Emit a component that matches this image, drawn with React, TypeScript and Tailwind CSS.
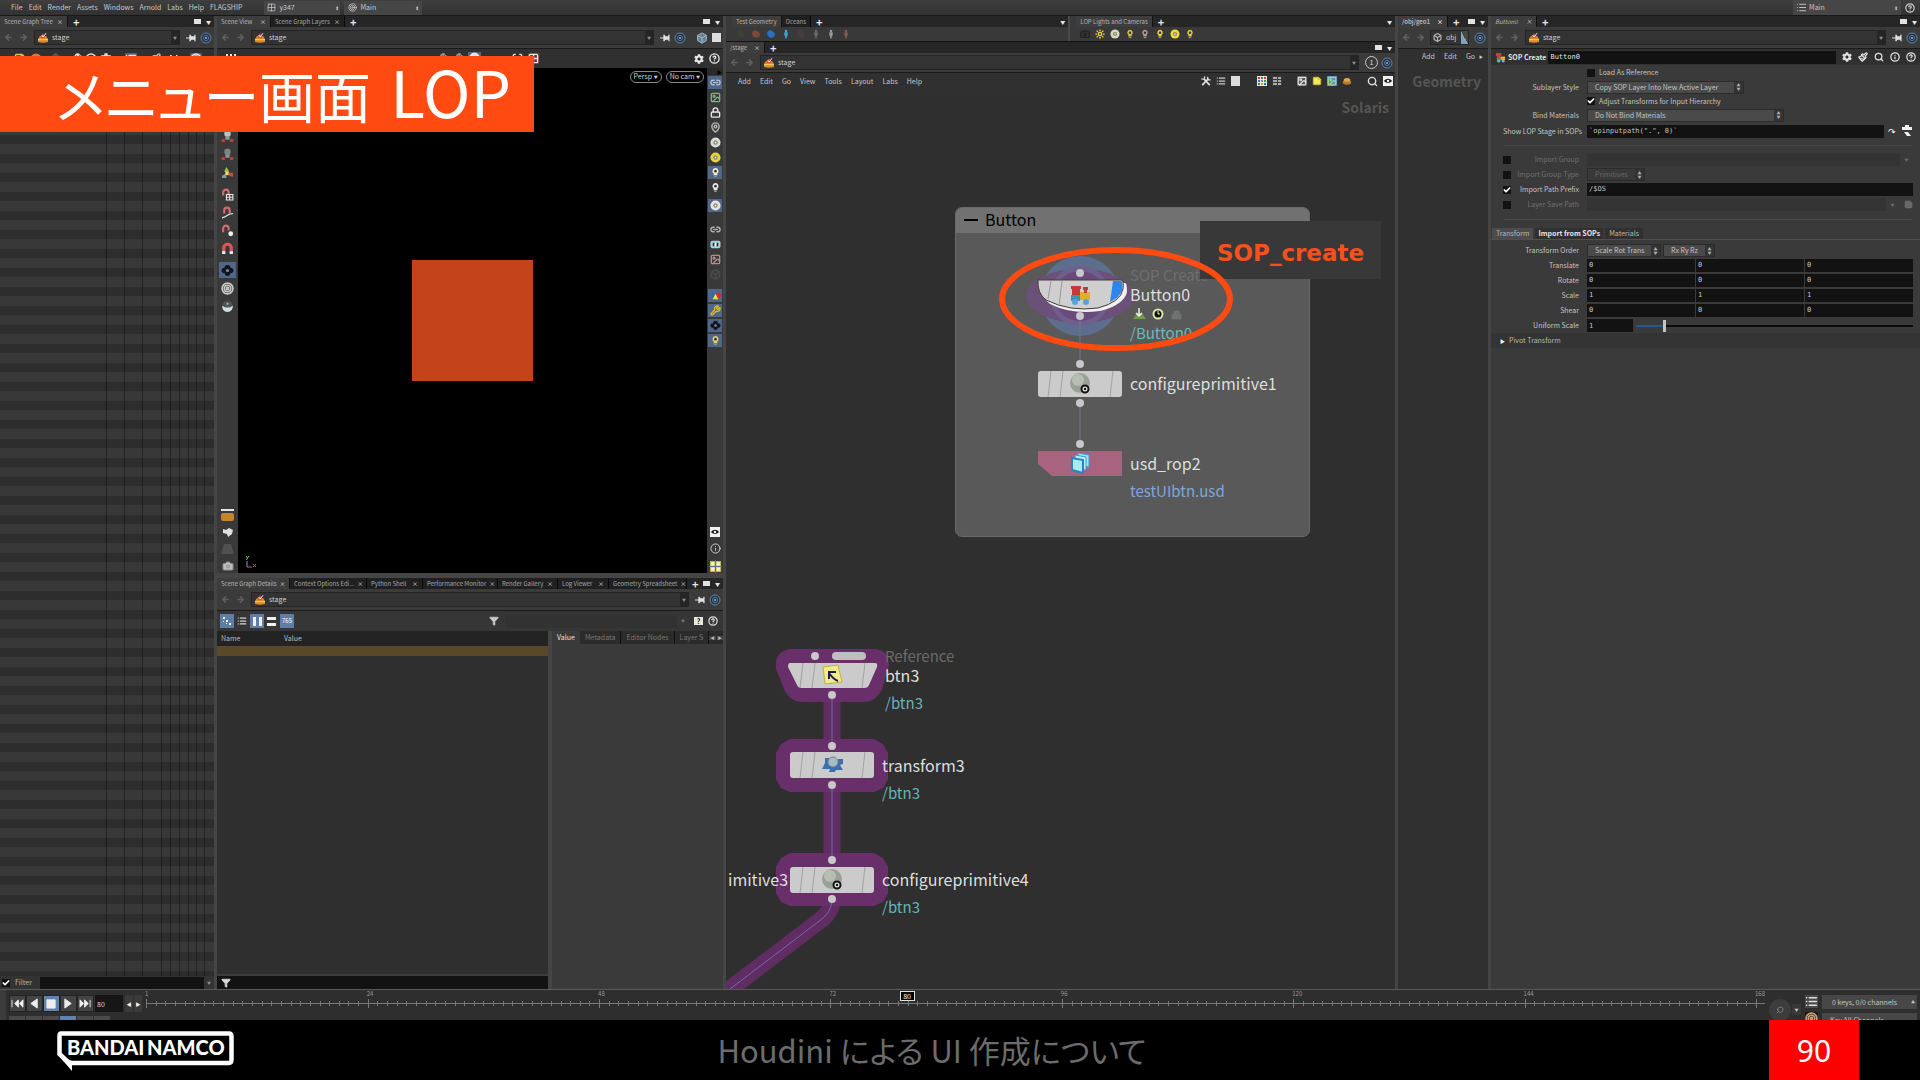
import type { ComponentType, ReactNode } from "react";
import clsx from "clsx";
import {
  ArrowLeft, ArrowRight, Box, Camera, Check, CircleQuestionMark, Filter,
  Grid2x2, Image, Info, Link2, List, Lock, MapPin, Paintbrush, Scan, Search,
  StickyNote, Sun, Target, Wrench,
} from "lucide-react";
import { FaCog } from "react-icons/fa";

type Glyph = ComponentType<{ className?: string; strokeWidth?: number }>;

interface ToolIcon {
  icon: Glyph;
  color?: string;
  on?: boolean;
  gap?: string;
}

function MagnetGlyph({ className }: { className?: string }) {
  return (
    <svg viewBox="0 0 12 12" className={className} fill="none">
      <path d="M2.500 10 V5.500 A3.500 3.500 0 0 1 9.500 5.500 V10" stroke="currentColor" strokeWidth="3" />
      <path d="M1 8.500h3V11H1zM8 8.500h3V11H8z" fill="#ececec" />
    </svg>
  );
}

function MagnetGridGlyph({ className }: { className?: string }) {
  return (
    <svg viewBox="0 0 12 12" className={className} fill="none">
      <path d="M2 7 V4 A2.500 2.500 0 0 1 7 4 V7" stroke="currentColor" strokeWidth="2" />
      <path d="M5 6h6v5h-6zM8 6v5M5 8.500h6" stroke="#e6e6e6" />
    </svg>
  );
}

function MagnetCurveGlyph({ className }: { className?: string }) {
  return (
    <svg viewBox="0 0 12 12" className={className} fill="none">
      <path d="M3 7 V4 A2.500 2.500 0 0 1 8 4 V7" stroke="currentColor" strokeWidth="2" />
      <path d="M1 11 Q4 10 6 8.500 T11 7" stroke="#e6e6e6" strokeWidth="1.200" />
    </svg>
  );
}

function MagnetPointGlyph({ className }: { className?: string }) {
  return (
    <svg viewBox="0 0 12 12" className={className} fill="none">
      <path d="M2 7.500 V4 A2.500 2.500 0 0 1 7 4 V6" stroke="currentColor" strokeWidth="2" />
      <circle cx="9" cy="9" r="2.200" fill="#f0f0f0" />
    </svg>
  );
}

function AxisGlyph({ className }: { className?: string }) {
  return (
    <svg viewBox="0 0 12 12" className={className}>
      <path d="M5 1 L8 6 L5 7 L3 5Z" fill="#a9c23c" />
      <path d="M1 9 L5 7 L5 11 L1 11Z" fill="#8a9aa4" />
      <path d="M6 7 L11 6 L11 10 L7 9Z" fill="#c8503a" />
      <circle cx="5.500" cy="7" r="1.500" fill="#f0e27a" />
    </svg>
  );
}

function PersonGlyph({ className }: { className?: string }) {
  return (
    <svg viewBox="0 0 12 12" className={className}>
      <circle cx="6" cy="3.500" r="3" fill="currentColor" />
      <path d="M4 6h4v3H4z" fill="#8a9494" />
      <path d="M0 9l3 -1l1 3H1zM12 9l-3 -1l-1 3h3z" fill="#c04030" />
    </svg>
  );
}

function FigureGlyph({ className }: { className?: string }) {
  return (
    <svg viewBox="0 0 12 12" className={className} fill="currentColor">
      <circle cx="6" cy="2.500" r="1.500" />
      <path d="M4 4h4v4H7v3H5V8H4z" />
    </svg>
  );
}

function BlobGlyph({ className }: { className?: string }) {
  return (
    <svg viewBox="0 0 12 12" className={className} fill="currentColor">
      <path d="M2 3q3 -3 6 0q4 2 2 6q-4 3 -7 0q-3 -3 -1 -6z" />
    </svg>
  );
}

function BoatGlyph({ className }: { className?: string }) {
  return (
    <svg viewBox="0 0 12 12" className={className}>
      <path d="M1 6q5 -3 10 0v3q-5 3 -10 0z" fill="#b87a2a" />
      <path d="M2 4q4 -3 8 0l-1 3H3z" fill="#e0a64c" />
    </svg>
  );
}

// Black splat on a blue tile, used for object selection
function SplatGlyph({ className }: { className?: string }) {
  return (
    <svg viewBox="0 0 12 12" className={className}>
      <path d="M6 1a2 2 0 0 1 2.500 2.500q3 0 3 2.500t-3 2.500q0 2.500 -2.500 2.500t-2.500 -2.500q-3 0 -3 -2.500t3 -2.500a2 2 0 0 1 2.500 -2.500z" fill="#10151b" />
      <circle cx="6" cy="6" r="1.400" fill="#7f8f9f" />
    </svg>
  );
}

function DiscGlyph({ className }: { className?: string }) {
  return (
    <svg viewBox="0 0 12 12" className={className}>
      <circle cx="6" cy="6" r="5.500" fill="currentColor" />
      <circle cx="6" cy="6" r="2.500" fill="#8c8a6a" />
      <circle cx="6" cy="6" r="1" fill="#f4f4f4" />
    </svg>
  );
}

function BowlGlyph({ className }: { className?: string }) {
  return (
    <svg viewBox="0 0 12 12" className={className}>
      <ellipse cx="6" cy="4" rx="4" ry="3" fill="#4d5757" />
      <circle cx="6" cy="3.500" r="1" fill="#9fb0b0" />
      <path d="M1 5q5 4 10 0q0 6 -5 6t-5 -6z" fill="currentColor" />
    </svg>
  );
}

function BulbGlyph({ className }: { className?: string }) {
  return (
    <svg viewBox="0 0 12 12" className={className}>
      <path d="M6 1a3.500 3.500 0 0 1 2 6.200V9H4V7.200A3.500 3.500 0 0 1 6 1z" fill="currentColor" />
      <circle cx="6" cy="4.500" r="1.400" fill="#303030" />
      <path d="M4.500 9.500h3V11h-3z" fill="#909090" />
    </svg>
  );
}

function FilmGlyph({ className }: { className?: string }) {
  return (
    <svg viewBox="0 0 12 12" className={className}>
      <rect x="0.500" y="2" width="11" height="8" rx="2" fill="currentColor" />
      <path d="M3 4h2v4H3zM7 4h2v4H7z" fill="#222c30" />
      <path d="M5 4h2v4H5z" fill="#e8f4f8" />
    </svg>
  );
}

function ShapesGlyph({ className }: { className?: string }) {
  return (
    <svg viewBox="0 0 12 12" className={className}>
      <path d="M1 2h4v5H1z" fill="#2b66c8" />
      <circle cx="9" cy="6" r="3" fill="#c83030" />
      <path d="M6 4l3 6H3z" fill="#f0e04a" />
    </svg>
  );
}

function EyeGlyph({ className }: { className?: string }) {
  return (
    <svg viewBox="0 0 12 12" className={className}>
      <rect width="12" height="12" fill="#f0f0f0" />
      <path d="M1 6 Q6 0.500 11 6 Q6 10.500 1 6Z" fill="#181818" />
      <circle cx="6" cy="6" r="1.500" fill="#f0f0f0" />
    </svg>
  );
}

function QuadGlyph({ className }: { className?: string }) {
  return (
    <svg viewBox="0 0 12 12" className={className}>
      <path d="M1 1h10v10H1z" fill="#d7c352" />
      <path d="M2 2h3v3H2zM7 2h3v3H7zM2 7h3v3H2zM7 7h3v3H7z" fill="#f8f6d8" />
      <path d="M6 0v12M0 6h12" stroke="#5a6f92" />
    </svg>
  );
}

function PinGlyph({ className }: { className?: string }) {
  return (
    <svg viewBox="0 0 12 12" className={className}>
      <path d="M0 5.500h4V2h1.500l1 2H10V2h1.500v8H10V8H6.500l-1 2H4V6.500H0z" fill="currentColor" />
    </svg>
  );
}

function ToolsGlyph({ className }: { className?: string }) {
  return (
    <svg viewBox="0 0 12 12" className={className} fill="none" stroke="currentColor">
      <path d="M1.500 11 L9 3" strokeWidth="2" />
      <path d="M8 1v3.500h3.500" strokeWidth="1.500" />
      <path d="M4 4 L10.500 11" strokeWidth="2" />
      <path d="M0.500 3.500 L4 4 L4.500 0.500" strokeWidth="1.500" />
    </svg>
  );
}

const MAIN_MENU = ["File", "Edit", "Render", "Assets", "Windows", "Arnold", "Labs", "Help", "FLAGSHIP"];
const NETWORK_MENU = ["Add", "Edit", "Go", "View", "Tools", "Layout", "Labs", "Help"];
const TREE_COLUMNS = [
  "w-[107px]", "w-[18px]", "w-[18px]", "w-[19px]", "w-[9px]", "w-[9px]", "w-[9px]", "w-[8px]", "w-[8px]",
];

const LEFT_TOOLS: ToolIcon[] = [
  { icon: PersonGlyph, color: "text-[#b8c4c4]" },
  { icon: PersonGlyph, color: "text-[#7c8484]" },
  { icon: AxisGlyph },
  { icon: MagnetGridGlyph, color: "text-[#d56a6f]", gap: "mt-[4px]" },
  { icon: MagnetCurveGlyph, color: "text-[#d56a6f]" },
  { icon: MagnetPointGlyph, color: "text-[#d56a6f]" },
  { icon: MagnetGlyph, color: "text-[#d5575d]" },
  { icon: SplatGlyph, on: true, gap: "mt-[4px]" },
  { icon: Target, color: "text-[#c9c9c9]" },
  { icon: BowlGlyph, color: "text-[#cfe0e0]" },
];

const RIGHT_TOOLS: ToolIcon[] = [
  { icon: Link2, color: "text-[#aebdcc]", on: true },
  { icon: Image, color: "text-[#7fae83]" },
  { icon: Lock, color: "text-[#e6e6e6]" },
  { icon: MapPin, color: "text-[#b5b5b5]" },
  { icon: DiscGlyph, color: "text-[#dcdcdc]" },
  { icon: DiscGlyph, color: "text-[#e8d53a]" },
  { icon: BulbGlyph, color: "text-[#f2f0c0]", on: true },
  { icon: BulbGlyph, color: "text-[#ececec]" },
  { icon: DiscGlyph, color: "text-[#e6e6e6]", on: true, gap: "mt-[3px]" },
  { icon: Link2, color: "text-[#b0b0b0]", gap: "mt-[9px]" },
  { icon: FilmGlyph, color: "text-[#a8d4df]" },
  { icon: Image, color: "text-[#b58b8b]" },
  { icon: Box, color: "text-[#4c4c4c]" },
  { icon: ShapesGlyph, on: true, gap: "mt-[6px]" },
  { icon: Wrench, color: "text-[#e0b62c]", on: true },
  { icon: SplatGlyph, on: true },
  { icon: BulbGlyph, color: "text-[#e3cf6a]", on: true },
];

const TREE_TOOLS: { icon: Glyph; color: string; pad: string }[] = [
  { icon: StickyNote, color: "text-[#d8c35a]", pad: "ml-[14px]" },
  { icon: DiscGlyph, color: "text-[#e07b2c]", pad: "ml-[4px]" },
  { icon: Wrench, color: "text-[#5a5a5a]", pad: "ml-[6px]" },
  { icon: Wrench, color: "text-[#dedede]", pad: "ml-[10px]" },
  { icon: Info, color: "text-[#dedede]", pad: "ml-[3px]" },
  { icon: FaCog, color: "text-[#dedede]", pad: "ml-[3px]" },
  { icon: List, color: "text-[#dedede]", pad: "ml-[13px] bg-[#4d617c]" },
  { icon: Paintbrush, color: "text-[#bdbdbd]", pad: "ml-[12px]" },
  { icon: PinGlyph, color: "text-[#dedede]", pad: "ml-[5px]" },
  { icon: Target, color: "text-[#e6e6e6]", pad: "ml-[12px] bg-[#4d617c]" },
];

const LOWER_TABS = [
  { name: "Scene Graph Details", width: "w-[73px]" },
  { name: "Context Options Edi...", width: "w-[77px]" },
  { name: "Python Shell", width: "w-[56px]" },
  { name: "Performance Monitor", width: "w-[75px]" },
  { name: "Render Gallery", width: "w-[60px]" },
  { name: "Log Viewer", width: "w-[51px]" },
  { name: "Geometry Spreadsheet", width: "w-[78px]" },
];

const FRAMES = Array.from({ length: 168 }, (_, i) => i + 1);

function Tab({ name, active = false, closable = true, className }: {
  name: string; active?: boolean; closable?: boolean; className?: string;
}) {
  return (
    <button
      className={clsx(
        "flex h-full items-center justify-between gap-[3px] overflow-hidden border-r border-black/70 px-[4px] text-[6px] whitespace-nowrap",
        active ? "bg-[#3d3d3d] text-[#b4b4b4]" : "bg-[#202020] text-[#a6a6a6]",
        className,
      )}
    >
      <span>{name}</span>
      {closable && <span className="text-[#dddddd]">×</span>}
    </button>
  );
}

function TabBar({ children, square = true }: { children: ReactNode; square?: boolean }) {
  return (
    <div className="flex h-[11px] shrink-0 items-center bg-[#262626]">
      {children}
      <button className="ml-[5px] text-[11px] leading-[10px] font-bold text-[#e6e6e6]" aria-label="New tab">+</button>
      <div className="ml-auto flex items-center gap-[5px] pr-[3px]">
        {square && <button className="h-[5px] w-[7px] bg-[#e2e2e2]" aria-label="Maximize" />}
        <button aria-label="Pane menu" className="text-[5px] leading-[6px] text-[#e6e6e6]">▼</button>
      </div>
    </div>
  );
}

function StageIcon() {
  return (
    <svg viewBox="0 0 12 12" className="h-[12px] w-[12px] shrink-0">
      <path d="M1 7 L3 4 H9 L11 7 V10 Q6 11.500 1 10Z" fill="#dd8a26" />
      <path d="M1 7 H11 V8.200 H1Z" fill="#f4c566" />
      <path d="M3.500 5.800 L6 1 L8.500 5.800Z" fill="#d8483a" />
      <path d="M4.600 3 L6.200 5 L9 1.200" stroke="#f2f2f2" strokeWidth="1" fill="none" />
    </svg>
  );
}

function TargetDot() {
  return (
    <svg viewBox="0 0 12 12" className="h-[12px] w-[12px] shrink-0">
      <circle cx="6" cy="6" r="5" fill="#26364a" stroke="#6080a2" strokeWidth="1" />
      <circle cx="6" cy="6" r="2.600" fill="none" stroke="#54728f" strokeWidth="1" />
      <circle cx="6" cy="6" r="1" fill="#9ab6d2" />
    </svg>
  );
}

function PathBar({ children, height = "h-[22px]" }: { children?: ReactNode; height?: string }) {
  return (
    <div className={clsx("flex shrink-0 items-center gap-[6px] border-b border-[#1a1a1a] bg-[#3b3b3b] pr-[2px] pl-[4px]", height)}>
      <ArrowLeft className="h-[9px] w-[9px] shrink-0 text-[#606060]" strokeWidth={4} />
      <ArrowRight className="h-[9px] w-[9px] shrink-0 text-[#606060]" strokeWidth={4} />
      <button className="flex h-[15px] min-w-0 flex-1 items-center gap-[3px] border border-[#242424] bg-[#333333] pl-[2px] text-[7px] text-[#d0d0d0]">
        <StageIcon />
        <span>stage</span>
        <span className="ml-auto flex h-full w-[8px] items-center justify-center bg-[#252525] text-[4px] text-[#909090]">▼</span>
      </button>
      {children ?? (
        <div className="flex items-center gap-[4px]">
          <PinGlyph className="h-[10px] w-[10px] text-[#e2e2e2]" />
          <TargetDot />
        </div>
      )}
    </div>
  );
}

function ToolStrip({ tools, dense = false }: { tools: ToolIcon[]; dense?: boolean }) {
  return (
    <>
      {tools.map((tool, i) => (
        <button
          key={i}
          aria-label={`Tool ${i + 1}`}
          className={clsx(
            "flex shrink-0 items-center justify-center",
            dense ? "h-[15px] w-[14px]" : "h-[18px] w-[17px]",
            tool.gap,
            tool.on && "border-y border-[#3a3a3a] bg-[#50678a]",
          )}
        >
          <tool.icon className={clsx(dense ? "h-[11px] w-[11px]" : "h-[13px] w-[13px]", tool.color)} strokeWidth={3} />
        </button>
      ))}
    </>
  );
}

function SceneGraphTree() {
  return (
    <section className="flex min-w-0 flex-col border-r-3 border-[#454545] bg-[#333333]">
      <TabBar><Tab name="Scene Graph Tree" active className="w-[68px]" /></TabBar>
      <PathBar />
      <div className="flex h-[19px] shrink-0 items-center bg-[#303030]">
        {TREE_TOOLS.map((tool, i) => (
          <tool.icon key={i} className={clsx("h-[12px] w-[12px] shrink-0", tool.color, tool.pad)} strokeWidth={3} />
        ))}
      </div>
      <div className="flex flex-1 bg-[repeating-linear-gradient(180deg,#383838_0px,#383838_10px,#2d2d2d_10px,#2d2d2d_19px)]">
        {TREE_COLUMNS.map((width, i) => (
          <div key={i} className={clsx("border-r border-black/35", width)} />
        ))}
      </div>
      <div className="flex h-[13px] shrink-0 items-center bg-[#333333] pl-[2px] text-[7px] text-[#b5b5b5]">
        <Tick id="filter" on />
        <label htmlFor="filter" className="ml-[5px]">Filter</label>
        <input aria-label="Filter text" className="ml-[8px] h-[12px] min-w-0 flex-1 bg-[#121212]" />
        <span className="px-[3px] text-[4px] text-[#909090]">▼</span>
      </div>
    </section>
  );
}

function Viewport() {
  return (
    <div className="flex min-h-0 flex-1">
      <div className="flex w-[21px] shrink-0 flex-col items-center bg-[#393939] pt-[59px] pb-px">
        <ToolStrip tools={LEFT_TOOLS} />
        <div className="mt-auto flex flex-col items-center gap-[5px]">
          <span className="flex h-[12px] w-[13px] flex-col justify-between">
            <i className="h-[2px] bg-[#e4e4e4]" />
            <i className="h-[8px] rounded-xs bg-[#c5832c]" />
          </span>
          <svg viewBox="0 0 12 12" className="h-[12px] w-[12px]" fill="#e0e0e0">
            <path d="M1 3l3 1l3 -2l4 2l-1 4l-4 3l-1 -3l-4 -1z" />
          </svg>
          <svg viewBox="0 0 13 12" className="h-[12px] w-[13px]" fill="#505050">
            <path d="M3 1h7l3 10H0z" />
          </svg>
          <Camera className="h-[12px] w-[12px] fill-[#bdbdbd] text-[#8d8d8d]" />
        </div>
      </div>
      <div className="relative flex flex-1 items-center justify-center bg-black">
        <div className="h-[121px] w-[121px] bg-[#c4431b]" />
        <div className="absolute top-[3px] right-[3px] flex gap-[4px] text-[7px] text-[#d6d6d6]">
          {["Persp", "No cam"].map((name) => (
            <button key={name} className="h-[12px] rounded-full border border-[#8a8a8a] bg-black px-[3px] leading-[9px]">
              {name} <span className="text-[4px]">▼</span>
            </button>
          ))}
        </div>
        <svg viewBox="0 0 14 14" className="absolute bottom-[4px] left-[6px] h-[14px] w-[14px]" fill="none">
          <path d="M2 1 L3.500 3 L5 1 M3.500 3 L2.500 5" stroke="#6fd06f" />
          <path d="M3 6 V12" stroke="#6f9fd0" />
          <path d="M3 12 H8" stroke="#d05f8f" />
          <path d="M9 9 L12 12 M12 9 L9 12" stroke="#d05f5f" />
        </svg>
      </div>
      <div className="flex w-[16px] shrink-0 flex-col items-center bg-[#393939]">
        <span className="flex h-[7px] w-full items-center justify-end bg-[#2a2a2a] pr-px text-[5px] text-black">▶</span>
        <ToolStrip tools={RIGHT_TOOLS} dense />
        <div className="mt-auto flex flex-col items-center gap-[6px]">
          <EyeGlyph className="h-[10px] w-[10px]" />
          <Info className="h-[11px] w-[11px] text-[#d5d5d5]" />
          <QuadGlyph className="h-[13px] w-[13px]" />
        </div>
      </div>
    </div>
  );
}

function SceneDetails() {
  return (
    <div className="flex h-[411px] shrink-0 flex-col">
      <TabBar>
        {LOWER_TABS.map((tab, i) => (
          <Tab key={tab.name} name={tab.name} active={i === 0} className={tab.width} />
        ))}
      </TabBar>
      <PathBar />
      <div className="flex h-[20px] shrink-0 items-center bg-[#363636] pl-[3px]">
        <span className="flex h-[14px] w-[14px] items-center justify-center bg-[#5d7fa5]">
          <svg viewBox="0 0 10 10" className="h-[10px] w-[10px]" fill="#f0f0f0">
            <path d="M1 1h2v2h-2zM4 4h2v2h-2zM7 7h2v2h-2zM4 7h1v1h-1zM1 5h1v1h-1z" />
          </svg>
        </span>
        <List className="ml-[3px] h-[10px] w-[10px] text-[#d5d5d5]" strokeWidth={3} />
        <span className="ml-[3px] flex h-[14px] w-[14px] items-center justify-center gap-[3px] bg-[#5d7fa5]">
          <i className="h-[9px] w-[3px] bg-[#f0f0f0]" />
          <i className="h-[9px] w-[3px] bg-[#f0f0f0]" />
        </span>
        <span className="ml-[3px] flex h-[14px] w-[9px] flex-col items-center justify-center gap-[3px]">
          <i className="h-[3px] w-full bg-[#f0f0f0]" />
          <i className="h-[3px] w-full bg-[#f0f0f0]" />
        </span>
        <span className="ml-[4px] flex h-[14px] w-[14px] items-center justify-center bg-[#5d7fa5] text-[6px] text-white">765</span>
        <Filter className="ml-[195px] h-[10px] w-[10px] shrink-0 fill-[#c8c8c8] text-[#c8c8c8]" />
        <input aria-label="Filter details" className="ml-[6px] h-[13px] min-w-0 flex-1 bg-[#323232]" />
        <span className="px-[4px] text-[4px] text-[#777777]">▼</span>
        <span className="ml-[5px] flex h-[8px] w-[9px] items-center justify-center bg-[#e8e8d8] text-[7px] font-bold text-black">?</span>
        <CircleQuestionMark className="mr-[5px] ml-[5px] h-[10px] w-[10px] shrink-0 text-[#dcdcdc]" strokeWidth={3} />
      </div>
      <div className="flex min-h-0 flex-1">
        <div className="flex w-[335px] shrink-0 flex-col border-r-4 border-[#454545]">
          <table className="w-full text-left text-[7px] text-[#bdbdbd]">
            <thead>
              <tr className="h-[15px] bg-[#232323]">
                <th className="w-[63px] pl-[4px] font-normal">Name</th>
                <th className="pl-[4px] font-normal">Value</th>
              </tr>
            </thead>
            <tbody>
              <tr className="h-[10px] bg-[#5a4828]"><td colSpan={2} /></tr>
            </tbody>
          </table>
          <div className="flex-1 bg-[#2f2f2f]" />
          <div className="flex h-[15px] items-center border-t-2 border-[#3d3d3d] bg-[#121212] pl-[4px]">
            <Filter className="h-[10px] w-[10px] fill-[#d8d8d8] text-[#d8d8d8]" />
            <input aria-label="Filter rows" className="ml-[4px] h-full flex-1" />
          </div>
        </div>
        <div className="min-w-0 flex-1 bg-[#3a3a3a]">
          <div className="flex h-[13px] items-center bg-[#2b2b2b] text-[7px] whitespace-nowrap text-[#777777]">
            <button className="h-full bg-[#3a3a3a] px-[5px] text-[#e0e0e0]">Value</button>
            {["Metadata", "Editor Nodes", "Layer S"].map((name) => (
              <button key={name} className="h-full border-r border-black/60 px-[5px]">{name}</button>
            ))}
            <button aria-label="Previous tabs" className="ml-auto w-[7px] bg-[#454545] text-[4px] text-[#bbbbbb]">◀</button>
            <button aria-label="Next tabs" className="ml-px w-[7px] bg-[#454545] text-[4px] text-[#bbbbbb]">▶</button>
          </div>
        </div>
      </div>
    </div>
  );
}

function ScenePane() {
  return (
    <section className="flex min-w-0 flex-col border-r-3 border-[#454545]">
      <TabBar>
        <Tab name="Scene View" active className="w-[54px]" />
        <Tab name="Scene Graph Layers" className="w-[74px]" />
      </TabBar>
      <PathBar>
        <div className="flex items-center gap-[4px]">
          <PinGlyph className="h-[10px] w-[10px] text-[#e2e2e2]" />
          <TargetDot />
          <Box className="ml-[6px] h-[12px] w-[12px] fill-[#6a8196] text-[#9db4c9]" />
          <span className="h-[9px] w-[9px] bg-[#dedede]" />
        </div>
      </PathBar>
      <div className="flex h-[19px] shrink-0 items-center gap-[5px] bg-[#303030] pr-[3px] text-[#e6e6e6]">
        <span className="mb-[7px] ml-[9px] flex gap-[2px]">
          {[0, 1, 2].map((n) => <i key={n} className="h-[2px] w-[2px] bg-[#e6e6e6]" />)}
        </span>
        <Wrench className="ml-auto h-[11px] w-[11px] text-[#a0a0a0]" strokeWidth={3} />
        <Wrench className="h-[11px] w-[11px] text-[#a0a0a0]" strokeWidth={3} />
        <MagnetGlyph className="h-[13px] w-[13px] bg-[#50678a]" />
        <Scan className="ml-[26px] h-[11px] w-[11px]" strokeWidth={3} />
        <Grid2x2 className="mr-[150px] h-[11px] w-[11px] bg-[#6b3333]" strokeWidth={3} />
        <FaCog className="h-[10px] w-[10px]" />
        <CircleQuestionMark className="h-[11px] w-[11px]" strokeWidth={3} />
      </div>
      <Viewport />
      <div className="h-[5px] shrink-0 bg-[#454545]" />
      <SceneDetails />
    </section>
  );
}

// One flat node tile: light plate with the flag dividers
function Plate({ x, y }: { x: number; y: number }) {
  return (
    <g>
      <rect x={x} y={y} width="84" height="26" rx="3" fill="#cbcbcb" />
      <path
        d={`M${x + 13} ${y} l-3 26 M${x + 25} ${y} l-3 26 M${x + 75} ${y} l-3 26`}
        stroke="#a2a2a2"
        fill="none"
      />
    </g>
  );
}

function GearBall({ x, y }: { x: number; y: number }) {
  return (
    <g>
      <circle cx={x} cy={y} r="10" fill="#9aa196" />
      <circle cx={x - 2} cy={y - 3} r="6" fill="#b7bdb1" />
      <circle cx={x + 5} cy={y + 6} r="3.500" fill="#e8e8e8" stroke="#111111" strokeWidth="2" />
      <circle cx={x + 5} cy={y + 6} r="1.200" fill="#111111" />
    </g>
  );
}

function Dot({ x, y }: { x: number; y: number }) {
  return <circle cx={x} cy={y} r="4" fill="#c8c8c8" />;
}

const NODE_LABELS = [
  { text: "SOP Create", pos: "left-[404px] top-[177px]", look: "text-[15px] text-[#6e6e6e]" },
  { text: "Button0", pos: "left-[404px] top-[196px]", look: "text-[16px] text-[#dedede]" },
  { text: "/Button0", pos: "left-[404px] top-[235px]", look: "text-[15px] text-[#6cb9b9]" },
  { text: "configureprimitive1", pos: "left-[404px] top-[285px]", look: "text-[16px] text-[#dedede]" },
  { text: "usd_rop2", pos: "left-[404px] top-[365px]", look: "text-[16px] text-[#dedede]" },
  { text: "testUIbtn.usd", pos: "left-[404px] top-[393px]", look: "text-[15px] text-[#7fa6dd]" },
  { text: "Reference", pos: "left-[159px] top-[558px]", look: "text-[15px] text-[#6a6a6a]" },
  { text: "btn3", pos: "left-[159px] top-[577px]", look: "text-[16px] text-[#dedede]" },
  { text: "/btn3", pos: "left-[159px] top-[605px]", look: "text-[15px] text-[#63b4b8]" },
  { text: "transform3", pos: "left-[156px] top-[667px]", look: "text-[16px] text-[#dedede]" },
  { text: "/btn3", pos: "left-[156px] top-[695px]", look: "text-[15px] text-[#63b4b8]" },
  { text: "configureprimitive4", pos: "left-[156px] top-[781px]", look: "text-[16px] text-[#dedede]" },
  { text: "/btn3", pos: "left-[156px] top-[809px]", look: "text-[15px] text-[#63b4b8]" },
  { text: "imitive3", pos: "left-[2px] top-[781px]", look: "text-[16px] text-[#dedede]" },
];

function NodeCanvas() {
  return (
    <div className="relative min-h-0 flex-1 overflow-hidden bg-[#2f2f2f]">
      <h2 className="pt-[8px] pr-[6px] text-right text-[14px] leading-[20px] font-bold text-[#555555]">Solaris</h2>

      <div className="absolute top-[118px] left-[229px] h-[330px] w-[355px] overflow-hidden rounded-[7px] border border-[#686868] bg-[#595959]">
        <div className="flex h-[25px] items-center bg-[#717171] pb-[3px] pl-[8px] text-[16px] text-black">
          <span className="mt-[2px] h-[2px] w-[14px] bg-black" />
          <span className="ml-[7px]">Button</span>
        </div>
      </div>

      <svg className="absolute inset-0 h-full w-full" fill="none">
        {/* SOP create node with its selection rings */}
        <circle cx="354" cy="207" r="40" fill="#5d6d8e" />
        <ellipse cx="354" cy="207" rx="54" ry="27" fill="#6b5079" />
        <circle cx="354" cy="207" r="30" fill="#6f5f8c" />
        <ellipse cx="354" cy="207" rx="26" ry="25" fill="#6a4a7c" />
        <path d="M354 227 V275 M354 314 V355" stroke="#71798a" />
        <path d="M315 194 H399 Q401 194 401 203 Q398 216 374 222 Q346 226 324 215 Q314 208 315 194Z" fill="#f1f1f1" />
        <path d="M312 191 H395 Q398 191 397 200 Q395 213 372 219 Q344 223 320 211 Q311 204 312 191Z" fill="#cfcfcf" stroke="#4a3a3a" />
        <path d="M387 192 H395 Q397 193 396 201 Q394 208 384 213Z" fill="#2f86ea" />
        <path d="M325 192 L322 210 M336 192 L333 216" stroke="#999999" />
        <path d="M345 197h10v3h-1v7h-8v-7h-1z" fill="#c43a34" />
        <path d="M354 203h10v8h-10z" fill="#e0b02c" />
        <path d="M345 206h9v6h-9z" fill="#3f90b5" />
        <path d="M357 198h5v3h-1v3h-3v-3h-1z" fill="#c43a34" />
        <circle cx="349" cy="213" r="3" fill="#58a2d8" />
        <circle cx="360" cy="213" r="3" fill="#58a2d8" />
        <Dot x={354} y={184} />
        <Dot x={354} y={227} />
        <path d="M407 230 l4 -6 h5 l4 6z" fill="#6f9a4a" />
        <path d="M413 219v8m-3 -3l3 3l3 -3" stroke="#f0f0e0" strokeWidth="1.500" />
        <circle cx="432" cy="225" r="4.500" fill="#111111" stroke="#d5e8a8" strokeWidth="2" />
        <path d="M432 222v3h2" stroke="#e8f4c8" />
        <path d="M446 225h9v5h-9zM448 225v-3h5v3" fill="#6f7272" stroke="#6f7272" />

        <Dot x={354} y={275} />
        <Plate x={312} y={282} />
        <GearBall x={354} y={294} />
        <Dot x={354} y={314} />

        <Dot x={354} y={355} />
        <path d="M312 362 H396 V387 H326 L312 375Z" fill="#a8637f" />
        <path d="M352 364l11 2v12l-11 -2z" fill="#a8e0f2" stroke="#3a9fd0" />
        <path d="M349 366l11 2v13l-11 -2z" fill="#c4eaf6" stroke="#3a9fd0" />
        <path d="M346 369l11 2v13l-11 -3z" fill="#a8ecf2" stroke="#2386c4" strokeWidth="2" />

        {/* btn3 chain */}
        <path d="M106 606 V657 M106 696 V771" stroke="#602d62" strokeWidth="17" />
        <path d="M106 810 Q106 824 92 833 L-8 909" stroke="#602d62" strokeWidth="17" />
        <path d="M65 560 H150 Q163 562 163 577 L156 600 Q150 613 137 613 H77 Q64 613 58 600 L50 580 Q48 562 65 560Z" fill="#692f6b" />
        <path d="M64 650 H148 L157 655 L162 664 V690 L157 699 L148 703 H64 L55 699 L50 690 V664 L55 655Z" fill="#692f6b" />
        <path d="M64 764 H148 L157 769 L162 778 V804 L157 813 L148 817 H64 L55 813 L50 804 V778 L55 769Z" fill="#692f6b" />
        <path d="M106 606 V657 M106 696 V771 M106 810 Q106 824 92 833 L4 900" stroke="#7c62b8" strokeWidth="1" />
        <rect x="106" y="563" width="34" height="8" rx="4" fill="#bfbfbf" />
        <Dot x={89} y={567} />
        <path d="M64 574 H149 Q152 574 151 578 L143 596 Q142 599 138 599 H76 Q72 599 71 596 L62 578 Q62 574 64 574Z" fill="#cbcbcb" />
        <path d="M77 574l-3 25M89 574l-3 25M139 574l-3 25" stroke="#a2a2a2" />
        <path d="M97 578l15 -2l4 17l-17 2z" fill="#f2eb8e" stroke="#c0b040" />
        <path d="M112 592q-5 -2 -9 -8m0 6v-7h7" stroke="#1d1d4a" strokeWidth="2" />
        <Dot x={106} y={606} />

        <Dot x={106} y={657} />
        <Plate x={64} y={663} />
        <path d="M99 669h6v4h7v-3h5v5l-3 1l3 5h-7l-1 2h-6l1 -3h-8l3 -6z" fill="#3c6fae" />
        <circle cx="107" cy="673" r="5" fill="#a9bcc4" stroke="#6d8796" />
        <Dot x={106} y={696} />

        <Dot x={106} y={771} />
        <Plate x={64} y={778} />
        <GearBall x={106} y={790} />
        <Dot x={106} y={810} />
      </svg>

      {NODE_LABELS.map((label, i) => (
        <span key={i} className={clsx("absolute leading-[18px] whitespace-nowrap", label.pos, label.look)}>{label.text}</span>
      ))}

      <div className="absolute top-[132px] left-[474px] flex h-[58px] w-[181px] items-center justify-center bg-[#383838] pt-[6px] font-['DejaVu_Sans'] text-[23px] font-bold text-[#f4511e]">
        SOP_create
      </div>
      <svg className="absolute top-[155px] left-[270px] h-[110px] w-[240px]" fill="none">
        <ellipse cx="120" cy="55" rx="114" ry="49" stroke="#ff4a12" strokeWidth="6" />
      </svg>
    </div>
  );
}

function Shelf({ tabs, colors, icons }: { tabs: string[]; colors: string[]; icons: Glyph[] }) {
  return (
    <div className="flex min-w-0 flex-1 flex-col border-r-2 border-[#4a4a4a] pl-[6px] first:flex-[344] last:flex-[326] last:border-r-0">
      <TabBar square={false}>
        {tabs.map((name, i) => <Tab key={name} name={name} active={i === 0} closable={false} />)}
      </TabBar>
      <div className="flex flex-1 items-center gap-[5px] pl-[4px]">
        {colors.map((color, i) => {
          const Icon = icons[i];
          return <Icon key={i} className={clsx("h-[10px] w-[10px]", color)} strokeWidth={3} />;
        })}
      </div>
    </div>
  );
}

function NetworkPane() {
  return (
    <section className="flex min-w-0 flex-col border-r-3 border-[#454545]">
      <div className="flex h-[26px] shrink-0 border-b border-black/70 bg-[#393939]">
        <Shelf
          tabs={["Test Geometry", "Oceans"]}
          icons={[BlobGlyph, BlobGlyph, BlobGlyph, FigureGlyph, BlobGlyph, FigureGlyph, FigureGlyph, FigureGlyph]}
          colors={[
            "text-[#3a4232]", "text-[#7c4a3c]", "text-[#2a6fc4]", "text-[#3fa6d8]",
            "text-[#4a3c3a]", "text-[#6a6a6a]", "text-[#9a9a9a]", "text-[#8a5a4a]",
          ]}
        />
        <Shelf
          tabs={["LOP Lights and Cameras"]}
          icons={[Camera, Sun, DiscGlyph, BulbGlyph, BulbGlyph, BulbGlyph, DiscGlyph, BulbGlyph]}
          colors={[
            "text-[#202020]", "text-[#f0d84a]", "text-[#d8d8c0]", "text-[#d6b84a]",
            "text-[#b89a8a]", "text-[#e6cf3a]", "text-[#ecd93a]", "text-[#dfc52f]",
          ]}
        />
      </div>
      <TabBar><Tab name="/stage" active className="w-[39px]" /></TabBar>
      <PathBar height="h-[20px]">
        <div className="flex items-center gap-[3px]">
          <span className="flex h-[13px] w-[13px] items-center justify-center rounded-full border border-[#c8c8c8] text-[7px] text-[#dddddd]">1</span>
          <TargetDot />
        </div>
      </PathBar>
      <div className="flex h-[16px] shrink-0 items-center bg-[#303030] pr-[2px] pl-[12px] text-[7px] text-[#c6c6c6]">
        <div className="flex gap-[9px]">
          {NETWORK_MENU.map((name) => <button key={name}>{name}</button>)}
        </div>
        <div className="ml-auto flex items-center gap-[5px]">
          <ToolsGlyph className="h-[10px] w-[10px] text-[#e0e0e0]" />
          <List className="h-[10px] w-[10px] text-[#cccccc]" strokeWidth={3} />
          <span className="h-[10px] w-[9px] bg-[#dcdcdc]" />
          <span className="ml-[12px] grid h-[10px] w-[10px] grid-cols-3 gap-px bg-[#e8e8e8] p-px">
            {["bg-[#d33]", "bg-[#383]", "bg-[#d33]", "bg-[#36c]", "bg-[#888]", "bg-[#3a3]", "bg-[#383]", "bg-[#d93]", "bg-[#36c]"].map((c, i) => (
              <i key={i} className={c} />
            ))}
          </span>
          <span className="grid h-[10px] w-[10px] grid-cols-2 gap-px bg-[#3a3a3a] p-px">
            {Array.from({ length: 6 }, (_, i) => <i key={i} className="bg-[#aaaaaa]" />)}
          </span>
          <Image className="ml-[10px] h-[10px] w-[10px] bg-[#555555] text-[#e2e2e2]" strokeWidth={3} />
          <StickyNote className="h-[10px] w-[10px] fill-[#f2ea5c] text-[#c9b82e]" />
          <Image className="h-[10px] w-[10px] bg-[#4f8fc4] text-[#a8d48a]" strokeWidth={3} />
          <BoatGlyph className="h-[10px] w-[10px]" />
          <Search className="ml-[10px] h-[11px] w-[11px] text-[#e2e2e2]" strokeWidth={3} />
          <EyeGlyph className="h-[10px] w-[10px]" />
        </div>
      </div>
      <NodeCanvas />
    </section>
  );
}

function GeometryPane() {
  return (
    <section className="flex min-w-0 flex-col border-r-3 border-[#454545] bg-[#303030]">
      <TabBar><Tab name="/obj/geo1" active className="w-[50px] font-bold" /></TabBar>
      <div className="flex h-[22px] shrink-0 items-center gap-[5px] border-b border-[#1a1a1a] bg-[#3b3b3b] pr-[2px] pl-[4px]">
        <ArrowLeft className="h-[9px] w-[9px] shrink-0 text-[#606060]" strokeWidth={4} />
        <ArrowRight className="h-[9px] w-[9px] shrink-0 text-[#606060]" strokeWidth={4} />
        <div className="flex h-[15px] flex-1 items-center gap-[4px] border border-[#242424] bg-[#333333] pl-[2px] text-[7px] text-[#d0d0d0]">
          <Box className="h-[9px] w-[9px] text-[#bbbbbb]" strokeWidth={3} />
          <span>obj</span>
          <span className="ml-auto h-full w-[7px] bg-[linear-gradient(60deg,#7fa3c4_50%,#4a4a3a_50%)]" />
        </div>
        <TargetDot />
      </div>
      <div className="flex h-[15px] shrink-0 items-center gap-[9px] pl-[24px] text-[7px] text-[#c6c6c6]">
        <button>Add</button>
        <button>Edit</button>
        <button>Go</button>
        <span className="-ml-[5px] text-[4px]">▶</span>
      </div>
      <h2 className="pt-[7px] pr-[7px] text-right text-[14px] leading-[20px] font-bold text-[#555555]">Geometry</h2>
    </section>
  );
}

function Tick({ id, on = false, label }: { id: string; on?: boolean; label?: string }) {
  return (
    <span className="relative flex h-[8px] w-[8px] shrink-0">
      <input id={id} type="checkbox" defaultChecked={on} aria-label={label} className="peer h-full w-full appearance-none bg-[#121212]" />
      <Check className="pointer-events-none absolute inset-0 hidden h-[8px] w-[8px] text-white peer-checked:block" strokeWidth={5} />
    </span>
  );
}

function Choice({ id, value, width, off = false }: { id: string; value: string; width: string; off?: boolean }) {
  return (
    <span className={clsx("relative flex h-[13px] border border-[#2b2b2b]", off ? "bg-[#393939] text-[#666666]" : "bg-[#4a4a4a] text-[#c4c4c4]", width)}>
      <select id={id} aria-label={value} disabled={off} className="w-full appearance-none pl-[7px] text-[7px] leading-[11px]">
        <option>{value}</option>
      </select>
      <span className="pointer-events-none absolute inset-y-0 right-0 flex w-[9px] flex-col items-center justify-center bg-[#333333] text-[4px] leading-[4px] text-[#b0b0b0]">
        <span>▲</span>
        <span>▼</span>
      </span>
    </span>
  );
}

function Row({ label, htmlFor, children, off = false, tick, height = "h-[15px]" }: {
  label?: string; htmlFor?: string; children: ReactNode; off?: boolean; tick?: "on" | "off"; height?: string;
}) {
  return (
    <div className={clsx("flex items-center pr-[7px] text-[7px]", height, off ? "text-[#707070]" : "text-[#c2c2c2]")}>
      <div className="flex w-[96px] shrink-0 items-center pr-[8px] pl-[12px]">
        {tick && <Tick id={`${htmlFor}-on`} on={tick === "on"} label={`Use ${label}`} />}
        {label && <label htmlFor={htmlFor} className="ml-auto whitespace-nowrap">{label}</label>}
      </div>
      {children}
    </div>
  );
}

const entry = "h-[13px] min-w-0 flex-1 px-[2px] font-['DejaVu_Sans_Mono'] text-[7px] leading-[13px]";

function Vector({ label, value }: { label: string; value: string }) {
  return (
    <Row label={label} htmlFor={label}>
      <div className="flex flex-1 gap-px">
        {["x", "y", "z"].map((axis, i) => (
          <input
            key={axis}
            id={i === 0 ? label : undefined}
            aria-label={`${label} ${axis}`}
            defaultValue={value}
            className={clsx(entry, "bg-[#121212] text-[#cccccc]")}
          />
        ))}
      </div>
    </Row>
  );
}

function ParameterPane() {
  return (
    <section className="flex min-w-0 flex-col bg-[#3a3a3a]">
      <TabBar><Tab name="Button0" active className="w-[46px] italic" /></TabBar>
      <PathBar />
      <div className="flex h-[16px] shrink-0 items-center bg-[#303030] pr-[4px] pl-[4px] text-[7px] text-[#e0e0e0]">
        <svg viewBox="0 0 12 12" className="h-[11px] w-[11px] shrink-0">
          <path d="M1 1h6v3h-1v4h-4v-4h-1z" fill="#cf3f38" />
          <path d="M6 5h5v4h-5z" fill="#e3b52e" />
          <path d="M2 7h4v3h-4z" fill="#3f90c5" />
          <circle cx="4" cy="10" r="1.500" fill="#6fb2e0" />
          <circle cx="9" cy="10" r="1.500" fill="#6fb2e0" />
        </svg>
        <label htmlFor="node-name" className="mr-[2px] ml-[2px] font-bold">SOP Create</label>
        <input id="node-name" defaultValue="Button0" className={clsx(entry, "bg-[#121212]")} />
        <div className="ml-[6px] flex gap-[6px]">
          {[FaCog, Paintbrush, Search, Info, CircleQuestionMark].map((Icon, i) => (
            <Icon key={i} className="h-[10px] w-[10px]" strokeWidth={i === 0 ? 0 : 3} />
          ))}
        </div>
      </div>

      <Row>
        <Tick id="load-ref" />
        <label htmlFor="load-ref" className="ml-[4px]">Load As Reference</label>
      </Row>
      <Row label="Sublayer Style" htmlFor="sublayer" height="h-[14px]">
        <Choice id="sublayer" value="Copy SOP Layer Into New Active Layer" width="w-[157px]" />
      </Row>
      <Row height="h-[14px]">
        <Tick id="adjust" on />
        <label htmlFor="adjust" className="ml-[4px]">Adjust Transforms for Input Hierarchy</label>
      </Row>
      <Row label="Bind Materials" htmlFor="bind" height="h-[14px]">
        <Choice id="bind" value="Do Not Bind Materials" width="w-[197px]" />
      </Row>
      <Row label="Show LOP Stage in SOPs" htmlFor="lop" height="h-[18px]">
        <input id="lop" defaultValue={'`opinputpath(".", 0)`'} className={clsx(entry, "bg-[#121212]")} />
        <span className="ml-[4px] text-[9px] leading-[9px] text-white">↷</span>
        <svg viewBox="0 0 12 12" className="ml-[5px] h-[12px] w-[12px]" fill="#f0f0f0">
          <path d="M4 0h4v2h3v3H1V2h3zM3 7h4l3 4H6z" />
        </svg>
      </Row>
      <hr className="mt-[5px] mr-[8px] mb-[6px] ml-[13px] border-[#484848]" />
      <Row label="Import Group" htmlFor="group" tick="off" off>
        <input id="group" disabled className={clsx(entry, "bg-[#343434]")} />
        <span className="w-[13px] text-center text-[4px]">▼</span>
      </Row>
      <Row label="Import Group Type" htmlFor="group-type" tick="off" off>
        <Choice id="group-type" value="Primitives" width="w-[58px]" off />
      </Row>
      <Row label="Import Path Prefix" htmlFor="prefix" tick="on">
        <input id="prefix" defaultValue="/$OS" className={clsx(entry, "bg-[#121212]")} />
      </Row>
      <Row label="Layer Save Path" htmlFor="save" tick="off" off>
        <input id="save" disabled className={clsx(entry, "bg-[#343434]")} />
        <span className="w-[13px] text-center text-[4px]">▼</span>
        <StickyNote className="ml-[5px] h-[9px] w-[9px] fill-[#666666]" />
      </Row>
      <hr className="mt-[7px] mr-[8px] mb-[8px] ml-[13px] border-[#484848]" />

      <div className="flex h-[12px] gap-[2px] border-b border-[#505050] pl-px text-[7px] text-[#b8b8b8]">
        <button className="bg-[#4c4c4c] px-[4px]">Transform</button>
        <button className="bg-[#303030] px-[3px] font-bold text-[#e6e6e6]">Import from SOPs</button>
        <button className="bg-[#303030] px-[4px]">Materials</button>
      </div>
      <div className="mt-[3px]">
        <Row label="Transform Order" htmlFor="order">
          <Choice id="order" value="Scale Rot Trans" width="w-[74px]" />
          <span className="w-[2px]" />
          <Choice id="rot-order" value="Rx Ry Rz" width="w-[52px]" />
        </Row>
        <Vector label="Translate" value="0" />
        <Vector label="Rotate" value="0" />
        <Vector label="Scale" value="1" />
        <Vector label="Shear" value="0" />
        <Row label="Uniform Scale" htmlFor="uniform">
          <input id="uniform" defaultValue="1" className="h-[13px] w-[46px] bg-[#121212] px-[2px] font-['DejaVu_Sans_Mono'] text-[7px]" />
          <input
            type="range"
            min={0}
            max={10}
            defaultValue={1}
            step={0.1}
            aria-label="Uniform scale slider"
            className="ml-[3px] h-[13px] flex-1 appearance-none bg-[linear-gradient(90deg,#24598f_10%,#0c0c0c_10%)] bg-[length:100%_2px] bg-center bg-no-repeat [&::-webkit-slider-thumb]:h-[12px] [&::-webkit-slider-thumb]:w-[3px] [&::-webkit-slider-thumb]:appearance-none [&::-webkit-slider-thumb]:bg-[#c4c4c4]"
          />
        </Row>
      </div>
      <button className="flex h-[15px] items-center gap-[4px] bg-[#343434] pl-[9px] text-[7px] text-[#b4b4b4]">
        <span className="text-[5px] text-white">▶</span>
        Pivot Transform
      </button>
    </section>
  );
}

function PlayButtons() {
  const shapes = [
    "M1 2v8M8 2v8l-4-4zM13 2v8l-4-4z",
    "M10 1v10l-7-5z",
    "M2 2h9v9h-9z",
    "M3 1v10l7-5z",
    "M1 2v8l4-4zM6 2v8l4-4zM12 2v8",
  ];
  return (
    <div className="flex">
      {shapes.map((d, i) => (
        <button
          key={i}
          aria-label={["First frame", "Play back", "Stop", "Play", "Last frame"][i]}
          className={clsx("flex h-[17px] w-[17px] items-center justify-center border border-[#242424]", i === 2 ? "bg-[#5f83ab]" : "bg-[#444444]")}
        >
          <svg viewBox="0 0 14 12" className="h-[11px] w-[13px]" fill="#efefef" stroke="#efefef"><path d={d} /></svg>
        </button>
      ))}
    </div>
  );
}

function Timeline() {
  return (
    <div className="flex h-[31px] shrink-0 overflow-hidden border-t border-[#5a5a5a] bg-[#2e2e2e]">
      <div className="w-[125px] shrink-0 border-l-[6px] border-[#3c3c3c] pt-[5px] pl-[3px]">
        <div className="flex items-center">
          <PlayButtons />
          <input aria-label="Current frame" defaultValue="80" className="ml-px h-[17px] w-[28px] bg-[#161616] px-[2px] text-[7px] text-[#dddddd]" />
        </div>
        <div className="mt-[4px] flex gap-px">
          {[0, 1, 2, 3, 4, 5].map((n) => (
            <span key={n} className={clsx("h-[10px] w-[16px]", n === 3 ? "bg-[#5f83ab]" : "bg-[#4a4a4a]")} />
          ))}
        </div>
      </div>
      <div className="flex w-[18px] shrink-0 gap-px pt-[5px] text-[5px] text-[#efefef]">
        <button aria-label="Step back" className="h-[17px] w-[8px] bg-[#3a3a3a]">◀</button>
        <button aria-label="Step forward" className="h-[17px] w-[8px] bg-[#3a3a3a]">▶</button>
      </div>
      <div className="ml-[3px] flex flex-1 pr-px">
        {FRAMES.map((frame) => {
          const major = frame % 24 === 0 || frame === 1;
          return (
            <div key={frame} className={clsx("relative h-[31px] pt-[8px]", frame === 168 ? "w-[9px]" : "min-w-0 flex-1")}>
              <div className="h-[5px]">
                {major && <span className="absolute top-0 left-[-1px] text-[6px] leading-[7px] text-[#9a9a9a]">{frame}</span>}
              </div>
              <div className="h-px bg-[#777777]" />
              <div className={clsx("absolute left-0 w-px bg-[#777777]", major ? "top-[9px] h-[9px]" : "top-[11px] h-[5px]")} />
              {frame === 80 && (
                <span className="absolute top-px left-[-8px] z-10 flex h-[10px] w-[15px] items-center justify-center border border-[#e0e0e0] bg-black text-[7px] text-white">80</span>
              )}
            </div>
          );
        })}
      </div>
      <div className="flex w-[155px] shrink-0 items-start pl-[4px] text-[7px] text-[#c4c4c4]">
        <button aria-label="Set key" className="mt-[9px] flex h-[22px] w-[22px] items-center justify-center rounded-full bg-[#3c3c3c]">
          <Search className="h-[8px] w-[8px] -scale-x-100 text-[#999999]" />
        </button>
        <button aria-label="Key menu" className="mt-[14px] ml-[1px] h-[11px] w-[9px] bg-[#383838] text-[4px]">▼</button>
        <div className="mt-[5px] ml-[4px] flex flex-col gap-[4px]">
          <List className="h-[13px] w-[13px] bg-[#4a4a4a] text-[#e0e0e0]" strokeWidth={3} />
          <Target className="h-[13px] w-[13px] bg-[#16161e] text-[#c8a070]" strokeWidth={3} />
        </div>
        <div className="mt-[5px] ml-[4px] flex flex-1 flex-col gap-[4px] pr-[3px]">
          <button className="flex h-[14px] items-center justify-center gap-[14px] bg-[#474747] pl-[8px]">
            0 keys, 0/0 channels <span className="text-[4px]">▲</span>
          </button>
          <button className="flex h-[14px] items-center bg-[#474747] pl-[8px]">Key All Channels</button>
        </div>
      </div>
    </div>
  );
}

function Footer() {
  return (
    <footer className="relative flex h-[60px] shrink-0 items-center justify-center bg-black">
      <svg viewBox="0 0 180 44" className="absolute top-[9px] left-[56px] h-[44px] w-[180px]" role="img" aria-label="BANDAI NAMCO">
        <path d="M5 4.500 H173 Q175.500 4.500 175.500 8 V30 Q175.500 34 173 34 H13 L3.500 25 V7 Q3.500 4.500 5 4.500Z" fill="none" stroke="#ffffff" strokeWidth="4.500" />
        <path d="M2 26 L16 42 V32Z" fill="#ffffff" />
        <text x="11" y="26" fill="#ffffff" fontFamily="Lato" fontWeight="900" fontSize="20">BANDAI</text>
        <text x="91" y="26" fill="#ffffff" fontFamily="Lato" fontWeight="900" fontSize="20">NAMCO</text>
      </svg>
      <p className="pr-[56px] text-[31px] leading-[40px] text-[#6c6c6c] [font-feature-settings:'palt']">Houdini による UI 作成について</p>
      <span className="absolute top-0 right-[61px] flex h-[60px] w-[90px] items-center justify-center bg-[#ff0000] pt-[2px] font-['Noto_Sans'] text-[30px] text-white">90</span>
    </footer>
  );
}

export default function App() {
  return (
    <div className="relative flex min-h-screen flex-col overflow-hidden bg-[#2f2f2f] font-['Noto_Sans_CJK_JP',sans-serif] leading-none">
      <header className="flex h-[16px] shrink-0 items-center border-b border-black/60 bg-linear-to-b from-[#3e3e3e] to-[#323232] text-[7px] text-[#c8c8c8]">
        <nav className="flex gap-[6px] pl-[11px]">
          {MAIN_MENU.map((name) => <button key={name}>{name}</button>)}
        </nav>
        <button className="ml-[22px] flex h-[14px] w-[76px] items-center gap-[3px] bg-[#464646] pl-[3px]">
          <Grid2x2 className="h-[9px] w-[9px]" /> y347 <span className="ml-auto pr-px text-[5px]">⬍</span>
        </button>
        <button className="ml-[4px] flex h-[14px] w-[78px] items-center gap-[3px] bg-[#464646] pl-[4px]">
          <Target className="h-[9px] w-[9px]" /> Main <span className="ml-auto pr-[3px] text-[5px]">⬍</span>
        </button>
        <button className="ml-auto flex h-[15px] w-[108px] items-center gap-[2px] bg-[#464646] pl-[3px]">
          <List className="h-[11px] w-[11px]" /> Main <span className="ml-auto pr-[3px] text-[5px]">⬍</span>
        </button>
        <CircleQuestionMark className="mr-[5px] ml-[4px] h-[10px] w-[10px]" strokeWidth={3} />
      </header>
      <main className="grid min-h-[973px] flex-1 grid-cols-[minmax(0,217fr)_minmax(0,509fr)_minmax(0,672fr)_minmax(0,93fr)_minmax(0,429fr)]">
        <SceneGraphTree />
        <ScenePane />
        <NetworkPane />
        <GeometryPane />
        <ParameterPane />
      </main>
      <Timeline />
      <Footer />
      <h1 className="absolute top-[56px] left-0 flex h-[76px] w-[534px] items-baseline bg-[#ff4a12] pt-[2px] pl-[56px] text-[56px] leading-[64px] whitespace-nowrap text-white [font-feature-settings:'palt']">
        メニュー画面
        <span className="ml-[19px] text-[64px]">LOP</span>
      </h1>
    </div>
  );
}
